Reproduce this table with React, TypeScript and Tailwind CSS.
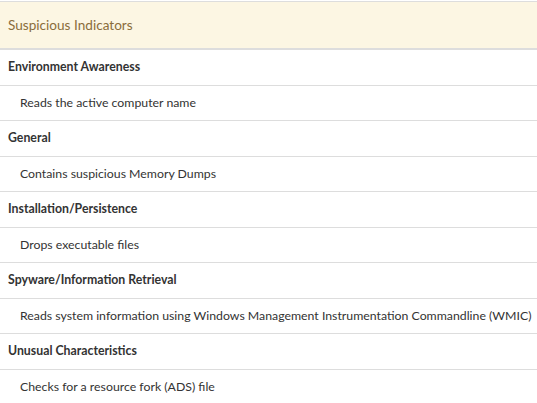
import React from "react";

const groups: { title: string; items: string[] }[] = [
  { title: "Environment Awareness", items: ["Reads the active computer name"] },
  { title: "General", items: ["Contains suspicious Memory Dumps"] },
  { title: "Installation/Persistence", items: ["Drops executable files"] },
  {
    title: "Spyware/Information Retrieval",
    items: ["Reads system information using Windows Management Instrumentation Commandline (WMIC)"],
  },
  { title: "Unusual Characteristics", items: ["Checks for a resource fork (ADS) file"] },
];

export default function App() {
  return (
    <div
      className="w-[537px] h-[403px] overflow-hidden bg-white text-[#333333]"
      style={{ fontFamily: "Lato, 'Open Sans', sans-serif" }}
    >
      <div className="mt-px border-t border-[#dddddd]">
        <div className="h-[48px] flex items-center px-2 bg-[#fcf6e3] text-[#8a6d3b] text-[13.6px] border-b-2 border-[#dddddd]">
          Suspicious Indicators
        </div>
        {groups.map((g, gi) => (
          <React.Fragment key={g.title}>
            <div
              className={`px-2 py-2 text-[12.3px] leading-[18.5px] font-bold whitespace-nowrap ${
                gi === 0 ? "" : "border-t border-[#dddddd]"
              }`}
            >
              {g.title}
            </div>
            {g.items.map((it) => (
              <div
                key={it}
                className="pl-5 pr-1 py-2 text-[12.3px] leading-[18.5px] border-t border-[#dddddd] whitespace-nowrap"
              >
                {it}
              </div>
            ))}
          </React.Fragment>
        ))}
      </div>
    </div>
  );
}
